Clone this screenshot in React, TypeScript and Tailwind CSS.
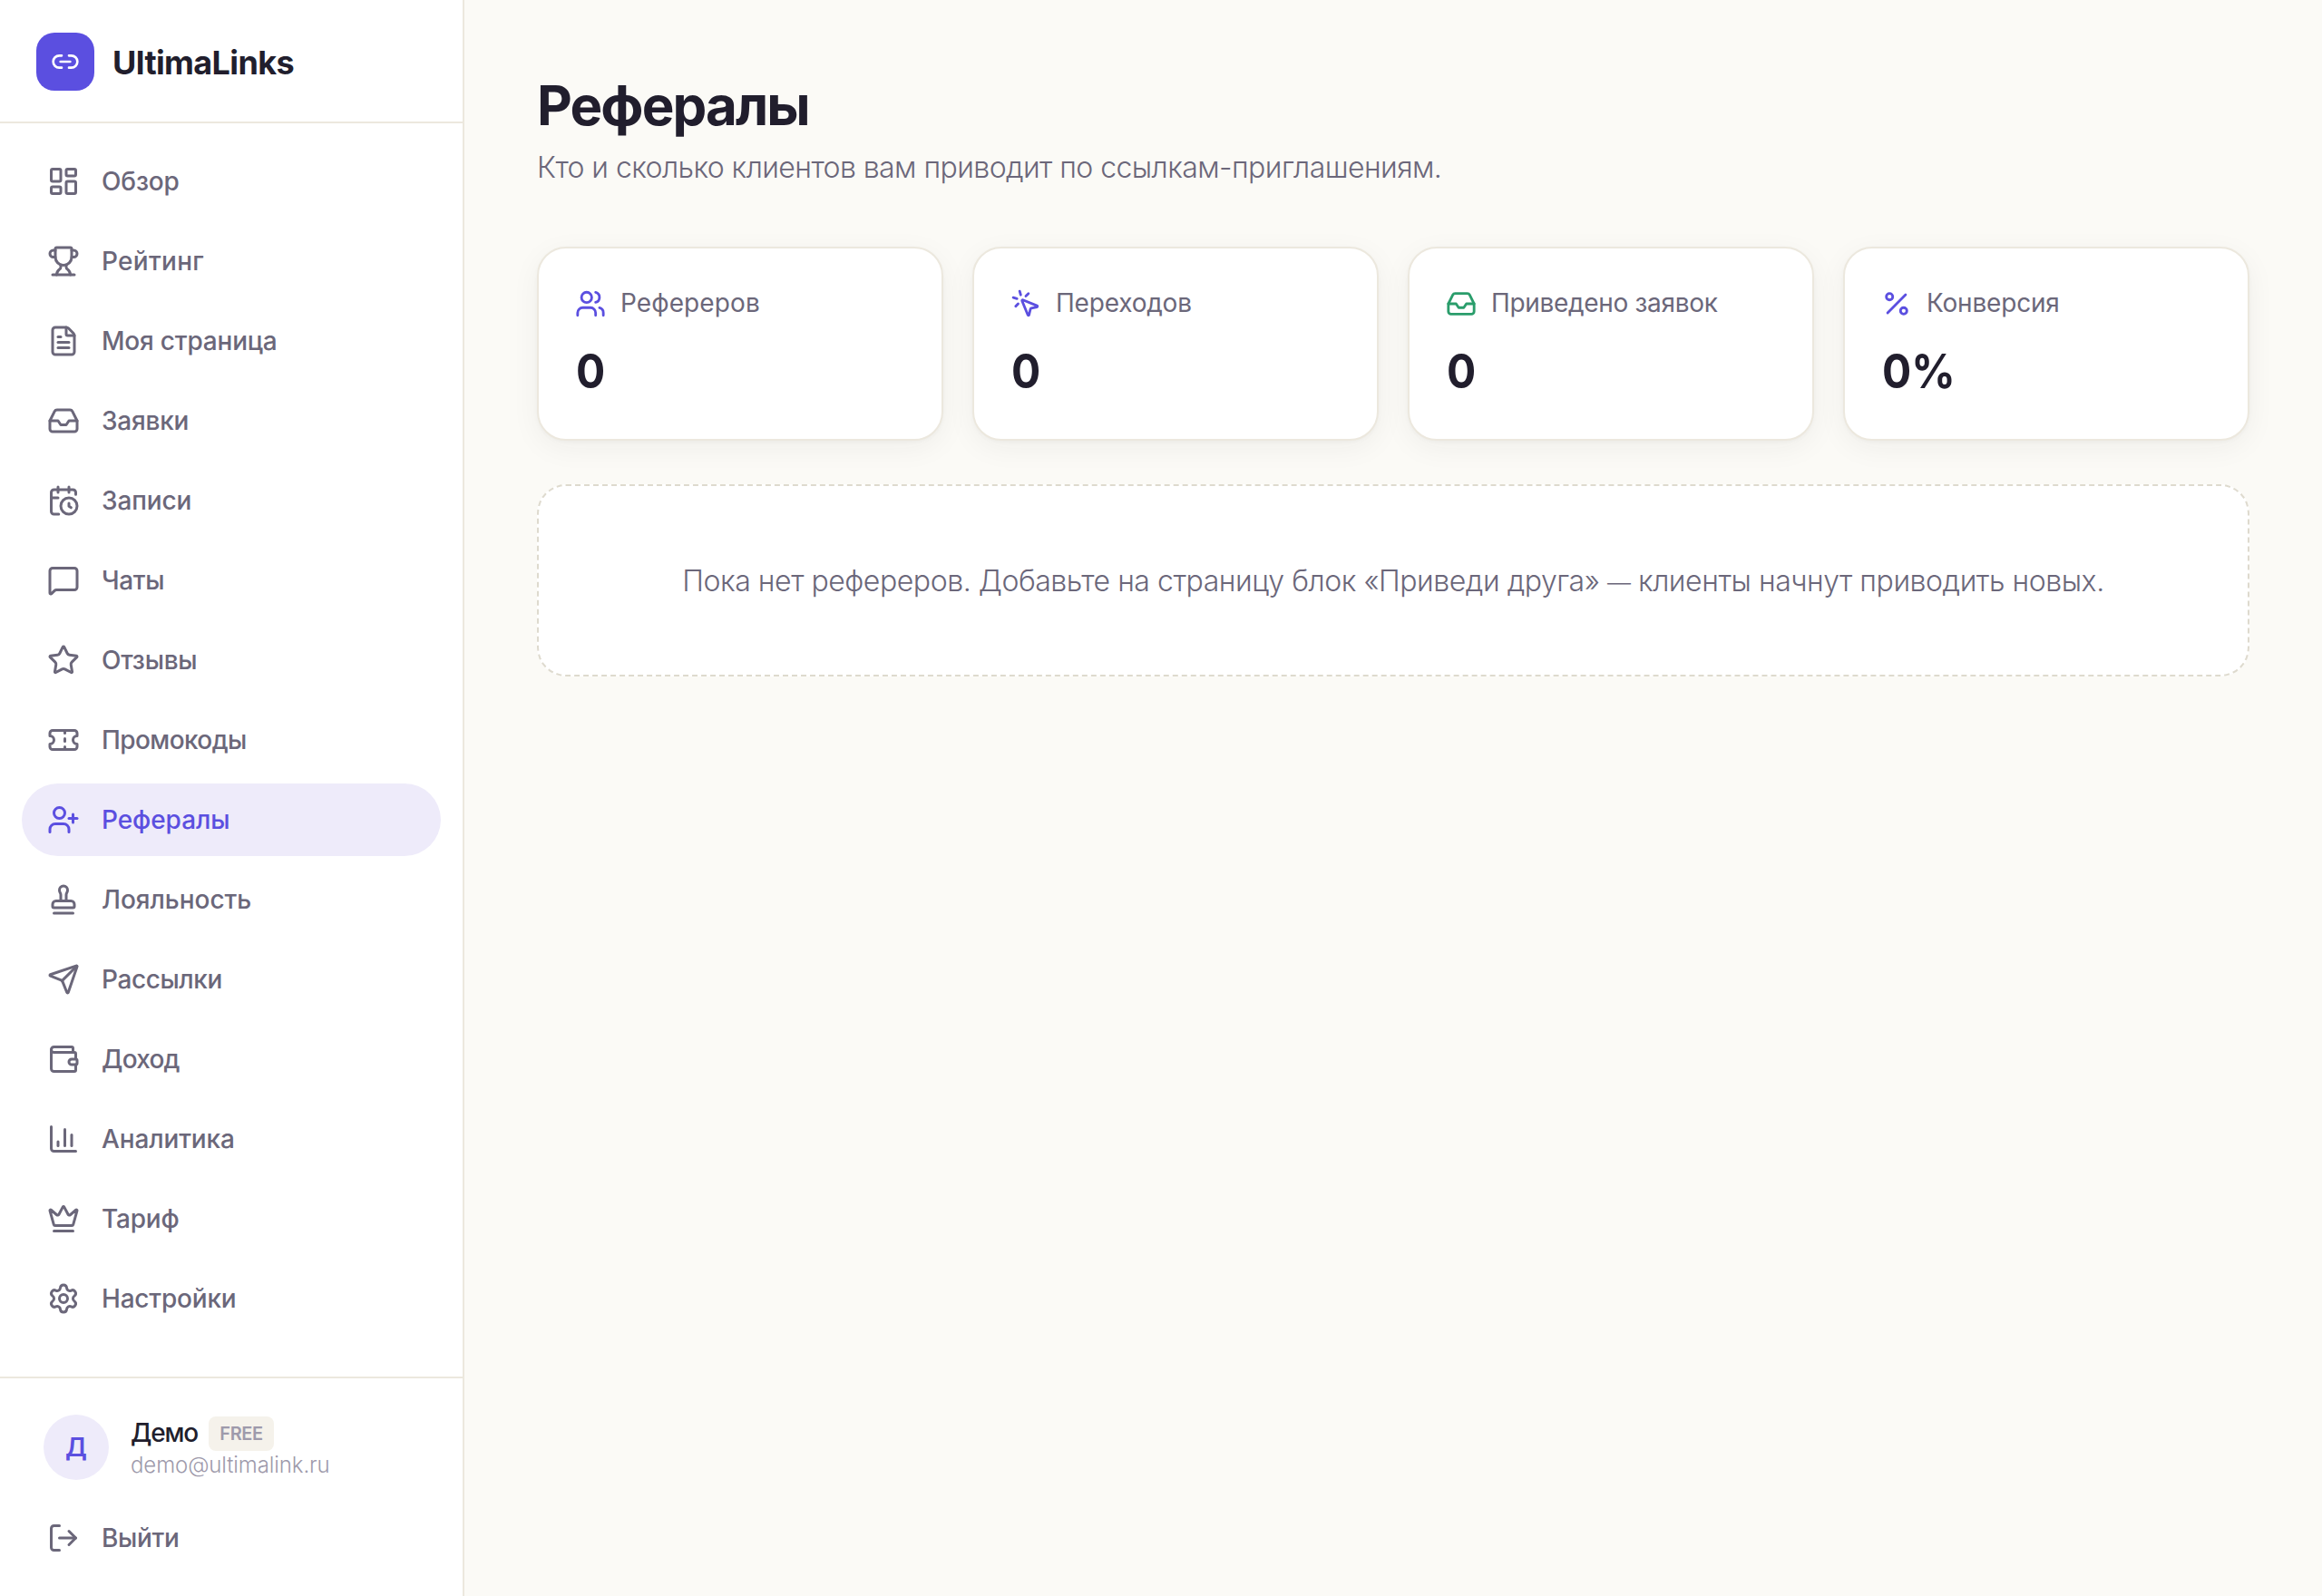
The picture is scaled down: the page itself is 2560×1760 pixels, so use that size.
import {
  CalendarClock,
  ChartColumn,
  Crown,
  FileText,
  Inbox,
  LayoutDashboard,
  Link2,
  LogOut,
  MessageSquare,
  MousePointerClick,
  Percent,
  Send,
  Settings,
  Stamp,
  Star,
  Ticket,
  Trophy,
  UserPlus,
  Users,
  Wallet,
} from "lucide-react";
import clsx from "clsx";

const navItems = [
  { label: "Обзор", icon: LayoutDashboard, tracking: "tracking-[-0.15px]" },
  { label: "Рейтинг", icon: Trophy, tracking: "tracking-[0.29px]" },
  { label: "Моя страница", icon: FileText, tracking: "tracking-[-0.2px]" },
  { label: "Заявки", icon: Inbox, tracking: "tracking-[-0.22px]" },
  { label: "Записи", icon: CalendarClock, tracking: "tracking-[-0.11px]" },
  { label: "Чаты", icon: MessageSquare, tracking: "tracking-[-0.36px]" },
  { label: "Отзывы", icon: Star, tracking: "tracking-[-0.27px]" },
  { label: "Промокоды", icon: Ticket, tracking: "tracking-[-0.59px]" },
  { label: "Рефералы", icon: UserPlus, tracking: "tracking-[-0.07px]", active: true },
  { label: "Лояльность", icon: Stamp, tracking: "tracking-[-0.04px]" },
  { label: "Рассылки", icon: Send, tracking: "tracking-[-0.4px]" },
  { label: "Доход", icon: Wallet, tracking: "tracking-[-0.75px]" },
  { label: "Аналитика", icon: ChartColumn, tracking: "tracking-[-0.13px]" },
  { label: "Тариф", icon: Crown, tracking: "tracking-[-0.2px]" },
  { label: "Настройки", icon: Settings, tracking: "tracking-[-0.2px]" },
];

const stats = [
  {
    label: "Рефереров",
    value: "0",
    icon: Users,
    color: "text-[#5b4fe0]",
    tracking: "tracking-[0.1px]",
  },
  {
    label: "Переходов",
    value: "0",
    icon: MousePointerClick,
    color: "text-[#5b4fe0]",
    tracking: "tracking-[-0.2px]",
  },
  {
    label: "Приведено заявок",
    value: "0",
    icon: Inbox,
    color: "text-[#2a9d6b]",
    tracking: "tracking-[-0.32px]",
  },
  {
    label: "Конверсия",
    value: "0%",
    icon: Percent,
    color: "text-[#5b4fe0]",
    tracking: "tracking-[-0.2px]",
  },
];

function Sidebar() {
  return (
    <aside className="flex w-[512px] shrink-0 flex-col border-r-2 border-[#ece8de] bg-white">
      {/* Logo */}
      <div className="flex h-[136px] shrink-0 items-center gap-5 border-b-2 border-[#ece8de] px-10 pt-[2px]">
        <div className="flex size-16 items-center justify-center rounded-[20px] bg-[#5b4fe0] text-white">
          <Link2 size={32} />
        </div>
        <span className="pt-[2px] text-[36px] leading-[54px] font-bold tracking-[-0.62px] text-[#211e2d]">
          UltimaLinks
        </span>
      </div>

      {/* Navigation */}
      <nav className="flex flex-1 flex-col gap-2 p-6">
        {navItems.map(({ label, icon: Icon, tracking, active }) => (
          <a
            key={label}
            href="#"
            className={clsx(
              "flex h-20 items-center gap-6 rounded-[40px] px-7 text-[28px] leading-10 font-medium",
              active ? "bg-[#eeebfa] text-[#5b4fe0]" : "text-[#6b677a]"
            )}
          >
            <Icon size={36} className="shrink-0" />
            <span className={tracking}>{label}</span>
          </a>
        ))}
      </nav>

      {/* Account */}
      <div className="border-t-2 border-[#ece8de] px-6 pt-10 pb-6">
        <div className="flex h-[72px] items-start gap-6 px-6">
          <div className="flex size-[72px] shrink-0 items-center justify-center rounded-full bg-[#eeebfa] text-[28px] font-semibold text-[#5b4fe0]">
            Д
          </div>
          <div className="pt-[2px]">
            <div className="flex h-[38px] items-center">
              <span className="w-[86px] pb-[3px] text-[28px] leading-9 font-medium tracking-[-1.2px] text-[#211e2d]">
                Демо
              </span>
              <span className="flex h-[38px] w-[72px] items-center justify-center rounded-lg bg-[#f5f2eb] text-[20px] font-semibold tracking-[-0.4px] text-[#9e9aab]">
                FREE
              </span>
            </div>
            <p className="text-[24px] leading-8 font-light tracking-[-0.1px] text-[#9e9aab]">
              demo@ultimalink.ru
            </p>
          </div>
        </div>
        <button className="mt-6 flex h-20 w-full items-center gap-6 px-7 text-[28px] leading-10 font-medium tracking-[-0.35px] text-[#6b677a]">
          <LogOut size={36} />
          Выйти
        </button>
      </div>
    </aside>
  );
}

export default function App() {
  return (
    <div className="flex h-[1760px] w-[2560px] overflow-hidden bg-[#fbfaf6] font-[Inter,sans-serif]">
      <Sidebar />

      <main className="flex-1 p-20">
        <h1 className="text-[60px] leading-[72px] font-bold tracking-[-1.9px] text-[#211e2d]">
          Рефералы
        </h1>
        <p className="mt-2 h-12 text-[32px] leading-[50px] font-light tracking-[-0.57px] text-[#6b677a]">
          Кто и сколько клиентов вам приводит по ссылкам-приглашениям.
        </p>

        {/* Stats */}
        <div className="mt-16 grid grid-cols-4 gap-8">
          {stats.map(({ label, value, icon: Icon, color, tracking }) => (
            <div
              key={label}
              className="h-[214px] rounded-[32px] border-2 border-[#ece8de] bg-white p-10 shadow-[0_2px_4px_rgba(33,30,45,0.03),0_8px_32px_rgba(33,30,45,0.05)]"
            >
              <div className="flex h-[42px] items-center gap-4">
                <Icon size={34} className={clsx("shrink-0", color)} />
                <span
                  className={clsx(
                    "self-start text-[28px] leading-10 whitespace-nowrap text-[#6b677a]",
                    tracking
                  )}
                >
                  {label}
                </span>
              </div>
              <div className="mt-[19px] ml-px origin-left scale-x-[0.92] text-[52px] leading-[70px] font-bold text-[#211e2d]">
                {value}
              </div>
            </div>
          ))}
        </div>

        {/* Empty state */}
        <div className="mt-12 flex h-[212px] items-center justify-center rounded-[32px] border-2 border-dashed border-[#dedace] bg-white pt-1">
          <p className="text-[32px] leading-[48px] font-light tracking-[-0.46px] whitespace-nowrap text-[#6b677a]">
            Пока нет рефереров. Добавьте на страницу блок «Приведи друга»{" "}
            <span className="text-[26px]">—</span> клиенты начнут приводить новых.
          </p>
        </div>
      </main>
    </div>
  );
}
